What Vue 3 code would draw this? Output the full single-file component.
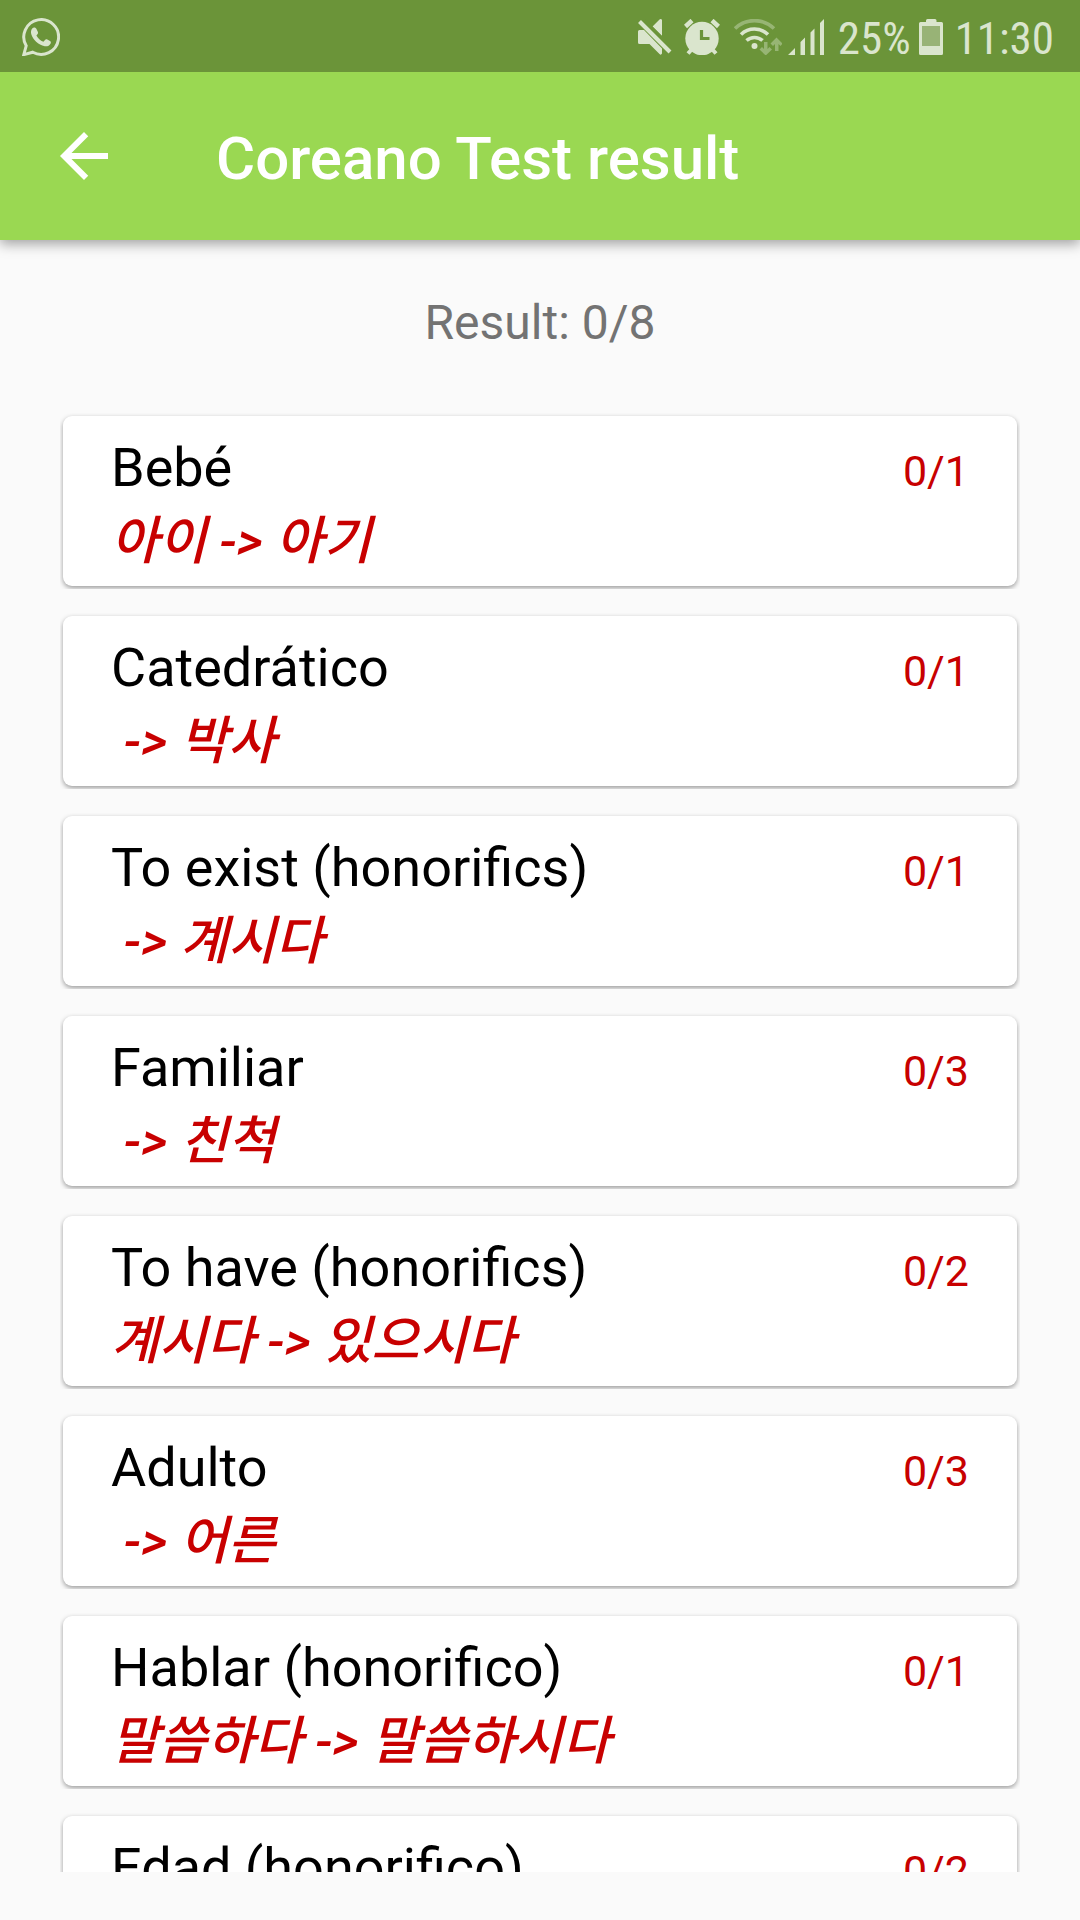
<script setup>
const results = [
  { word: 'Bebé', given: '아이', expected: '아기', score: '0/1' },
  { word: 'Catedrático', given: '', expected: '박사', score: '0/1' },
  { word: 'To exist (honorifics)', given: '', expected: '계시다', score: '0/1' },
  { word: 'Familiar', given: '', expected: '친척', score: '0/3' },
  { word: 'To have (honorifics)', given: '계시다', expected: '있으시다', score: '0/2' },
  { word: 'Adulto', given: '', expected: '어른', score: '0/3' },
  { word: 'Hablar (honorifico)', given: '말씀하다', expected: '말씀하시다', score: '0/1' },
  { word: 'Edad (honorifico)', given: '', expected: '', score: '0/2' },
]
</script>

<template>
  <div class="screen">
    <div class="status">
      <svg class="whatsapp" width="38" height="38" viewBox="0 0 38 38" aria-hidden="true">
        <path d="M1.8 36.6 4.2 27.8A17.4 17.4 0 1 1 10.8 34.2Z" fill="none" stroke="currentColor" stroke-width="3" />
        <path d="M10.2 10.6c1.4-1.8 3.6-1.2 4.4.6l1.2 2.6c.5 1.1.2 2-.6 2.8l-.8 1c1.6 3 3.8 5 7 6.2l1.6-1.8c.7-.8 1.4-.8 2.300-.4l2.700 1.300c1.100.6 1 1.600.5 2.800-1 2-3.400 3-5.700 2.500C16 26.700 11 21.700 9.300 16.300c-.6-2.100-.4-4.100.9-5.700Z" fill="currentColor" />
      </svg>
      <div class="tray">
        <svg class="mute" width="34" height="36" viewBox="0 0 34 36" aria-hidden="true">
          <path d="M0 12.500Q0 11 1.500 11H6L24 29.500V34.500Q23 36.500 21.500 35L11.500 25H1.500Q0 25 0 23.500Z M14.500 7.500 21.500.6Q23-.8 24 1V17Z" fill="currentColor" />
          <path d="M4.500-.5 35 30" stroke="#6b9439" stroke-width="3" />
          <path d="M1.500 2.500 32 33" stroke="currentColor" stroke-width="4" />
        </svg>
        <svg class="alarm" width="36" height="36" viewBox="0 0 36 36" aria-hidden="true">
          <path d="M1.500 7.500 8 1.500M34.500 7.500 28 1.500" stroke="currentColor" stroke-width="4.500" />
          <path d="M4 34.500 9 29M32 34.500 27 29" stroke="currentColor" stroke-width="4" />
          <circle cx="18" cy="19.500" r="16.700" fill="currentColor" />
          <path d="M17.500 11V19.500H25.500" fill="none" stroke="#6b9439" stroke-width="3.200" />
        </svg>
        <svg class="wifi" width="48" height="36" viewBox="0 0 48 36" fill="none" aria-hidden="true">
          <path d="M1 9.500A28 28 0 0 1 40 9.500" stroke="currentColor" stroke-width="3.600" opacity=".4" />
          <path d="M7 15.500A19.500 19.500 0 0 1 34 15.500M12.500 21.500A12 12 0 0 1 28.500 21.500" stroke="currentColor" stroke-width="3.600" />
          <circle cx="20.500" cy="27" r="3" fill="currentColor" />
          <path d="M30 23h3.500v7l2-2 2.500 2.500-6.300 6-6.200-6L28 28l2 2ZM41 32h3.500v-7l2 2 2-2.500-6-6-6 6L39 27l2-2Z" fill="currentColor" opacity=".4" />
        </svg>
        <svg class="signal" width="36" height="36" viewBox="0 0 36 36" fill="currentColor" aria-hidden="true">
          <path d="M0 36 7 29V36ZM12.500 23 17 18.500V36H12.500ZM22.500 13.500 26.500 9.500V36H22.500ZM32 4 36 0V36H32Z" />
        </svg>
        <span class="percent">25%</span>
        <svg class="battery" width="24" height="36" viewBox="0 0 24 36" aria-hidden="true">
          <path d="M7 3V1.500Q7 0 8.500 0H16Q17.500 0 17.500 1.500V3H22.500Q24 3 24 4.500V34.500Q24 36 22.500 36H1.500Q0 36 0 34.500V4.500Q0 3 1.500 3Z" fill="currentColor" />
          <path d="M3 7H21V27H3Z" fill="#98b376" />
        </svg>
        <span class="clock">11:30</span>
      </div>
    </div>

    <header class="bar">
      <button class="back" type="button" aria-label="Back">
        <svg width="48" height="48" viewBox="4 4 16 16" aria-hidden="true">
          <path d="M20 11H7.830l5.590-5.590L12 4l-8 8 8 8 1.410-1.410L7.830 13H20Z" fill="#fff" />
        </svg>
      </button>
      <h1>Coreano Test result</h1>
    </header>

    <main class="content">
      <p class="total">Result: 0/8</p>
      <ul class="list">
        <li v-for="item in results" :key="item.word" class="item">
          <article class="card">
            <div class="texts">
              <h2>{{ item.word }}</h2>
              <p v-if="item.expected" class="answer" lang="ko">{{ item.given }} -&gt; {{ item.expected }}</p>
            </div>
            <span class="score">{{ item.score }}</span>
          </article>
        </li>
      </ul>
    </main>
  </div>
</template>

<style>
body {
  margin: 0;
  background: #fafafa;
}
</style>

<style scoped>
.screen {
  display: flex;
  flex-direction: column;
  box-sizing: border-box;
  height: 100vh;
  padding-bottom: 48px;
  background: #fafafa;
  font-family: Roboto, "Noto Sans CJK KR", sans-serif;
}

h1,
h2,
p,
ul {
  margin: 0;
  padding: 0;
  font-weight: 400;
}

.status {
  display: flex;
  flex: none;
  align-items: center;
  justify-content: space-between;
  box-sizing: border-box;
  height: 72px;
  padding: 2px 26px 0 22px;
  background: #6b9439;
  color: #dae5cd;
}

.tray {
  display: flex;
  align-items: center;
  font-family: "Roboto Condensed", Roboto, sans-serif;
  font-size: 45px;
  line-height: 68px;
}

.percent,
.clock {
  padding-top: 4px;
}

.mute {
  margin-right: 12px;
}

.alarm {
  margin-right: 14px;
}

.wifi {
  margin-right: 6px;
}

.signal {
  margin-right: 14px;
}

.battery {
  margin: 0 12px 0 8px;
}

.bar {
  display: flex;
  flex: none;
  align-items: center;
  position: relative;
  z-index: 1;
  height: 168px;
  padding-left: 36px;
  background: #9ad852;
  box-shadow: 0 4px 12px rgba(0, 0, 0, 0.36);
  clip-path: inset(0 0 -20px 0);
}

.back {
  display: flex;
  padding: 24px;
  border: 0;
  background: none;
}

h1 {
  margin-left: 84px;
  padding-top: 6px;
  color: #fff;
  font-size: 60px;
  font-weight: 500;
  line-height: 72px;
}

.content {
  flex: 1;
  min-height: 0;
  overflow-y: auto;
  padding: 0 60px;
  scrollbar-width: none;
}

.total {
  padding: 55px 0 62px;
  color: #737373;
  font-size: 48px;
  line-height: 56px;
  text-align: center;
}

.list {
  display: flex;
  flex-direction: column;
  gap: 24px;
  list-style: none;
}

.item {
  flex: none;
  padding: 3px;
  overflow: hidden;
}

.card {
  display: flex;
  justify-content: space-between;
  box-sizing: border-box;
  min-height: 170px;
  padding: 20px 48px 0;
  border-radius: 9px;
  background: #fff;
  box-shadow: 0 2px 5px rgba(0, 0, 0, 0.38);
}

h2 {
  color: #000;
  font-size: 54px;
  line-height: 64px;
}

.answer {
  padding-top: 6px;
  color: #c80000;
  font-size: 52px;
  font-style: italic;
  font-weight: 500;
  line-height: 72px;
  white-space: pre;
}

.score {
  padding-top: 10px;
  color: #c80000;
  font-size: 43px;
  line-height: 50px;
}
</style>
